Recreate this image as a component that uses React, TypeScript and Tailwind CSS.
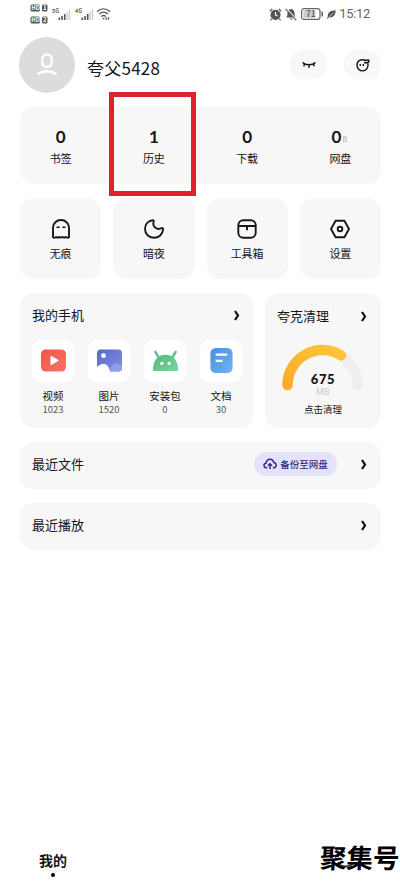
import type { ReactNode } from "react";

interface Item {
  label: string;
  value?: string;
  unit?: string;
  icon?: ReactNode;
}

const Chevron = () => (
  <svg width="6" height="11" viewBox="0 0 6 11" fill="none" stroke="#0c0c0c" strokeWidth="2.2">
    <path d="M1 1l3 4.500L1 10" />
  </svg>
);

const Signal = ({ name }: { name: string }) => (
  <svg width="19" height="14" viewBox="0 0 19 14">
    <text x="0" y="5.5" fontSize="5.5" fontWeight="700" fill="#666">
      {name}
    </text>
    <path d="M6.5 10.5h1.6V13H6.5zM9.2 9h1.6v4H9.2zM11.9 7h1.6v6h-1.6z" fill="#555" />
    <path d="M14.4 4.5h1.4V13h-1.4zM16.8 2.5h1.4V13h-1.4z" fill="#ccc" />
  </svg>
);

const Hd = ({ n }: { n: string }) => (
  <svg width="18" height="8" viewBox="0 0 18 8">
    <rect x="0.5" y="0.5" width="9.5" height="7" rx="1.5" fill="#555" />
    <rect x="12" y="0.5" width="5.5" height="7" rx="1.5" fill="#555" />
    <text x="1.3" y="6.3" fontSize="6" fontWeight="700" fill="#fff">
      HD
    </text>
    <text x="13.1" y="6.3" fontSize="6" fontWeight="700" fill="#fff">
      {n}
    </text>
  </svg>
);

const StatusBar = () => (
  <div className="flex h-[28px] items-center pl-[30px] pr-[30px]">
    <div className="flex flex-col gap-[4px]">
      <Hd n="1" />
      <Hd n="2" />
    </div>
    <div className="ml-[4px] flex items-center gap-[4px]">
      <Signal name="5G" />
      <Signal name="4G" />
    </div>
    <svg className="ml-[2px]" width="16" height="14" viewBox="0 0 16 14" fill="none" stroke="#555" strokeWidth="1.3">
      <path d="M1 4.7c4-3.8 9-3.8 13 0M3.2 7.1c2.8-2.5 6-2.5 8.8 0M5.3 9.5c1.5-1.4 3-1.4 4.5 0" />
      <path d="M6.5 11.7h1.8M10.2 10.2v2.6M12.5 10.2v2.6" />
    </svg>
    <div className="ml-auto flex items-center">
      <svg width="13" height="13" viewBox="0 0 13 13">
        <circle cx="6.5" cy="6.8" r="5.1" fill="#555" />
        <path d="M.8 3.3L3.3.9M12.2 3.3L9.7.9M2.7 10.8l-1.2 1.5M10.3 10.8l1.2 1.5" stroke="#555" strokeWidth="1.2" />
        <path d="M6.5 4v3.1l2 1" stroke="#fff" strokeWidth="1.1" fill="none" />
      </svg>
      <svg className="ml-[3px]" width="12" height="13" viewBox="0 0 12 13">
        <path
          d="M6 1c2.7.3 3.5 2.2 3.5 4.3 0 2.2.5 3.2 1.3 4.2H1.2c.8-1 1.3-2 1.3-4.2C2.5 3.2 3.3 1.3 6 1zM4.6 10.5h2.8c-.4 1.6-2.4 1.6-2.8 0z"
          fill="#555"
        />
        <path d="M1.5.8l10 11" stroke="#fff" strokeWidth="1.6" />
        <path d="M.5.8l10.8 11.6" stroke="#555" strokeWidth="1.1" />
      </svg>
      <svg className="ml-[4px]" width="23" height="12" viewBox="0 0 23 12">
        <rect x="0.6" y="0.6" width="18.4" height="10.8" rx="2.5" fill="none" stroke="#666" strokeWidth="1.2" />
        <rect x="2.3" y="2.3" width="12.2" height="7.4" rx="1" fill="#ccc" />
        <path d="M21.2 3.5v5" stroke="#666" strokeWidth="1.5" />
        <text x="5" y="9" fontSize="8.5" fontWeight="500" fill="#555">
          71
        </text>
      </svg>
      <svg className="ml-[3px]" width="9" height="9" viewBox="0 0 9 9">
        <path d="M8.7.3C4 .5.7 2 .8 6.5L0 8.4l.8.4 1-1.4C6.5 7.8 8.5 5 8.7.3z" fill="#555" />
        <path d="M1.6 7.3l4.8-4.6" stroke="#fff" strokeWidth=".6" />
      </svg>
      <span className="ml-[3px] font-['Roboto'] text-[13px] leading-[14px] tracking-[-0.3px] text-[#666]">15:12</span>
    </div>
  </div>
);

const Header = () => (
  <div className="mt-[8px] flex h-[57px] items-center px-[19px]">
    <div className="flex size-[56px] items-center justify-center rounded-full bg-[#dcdcdc]">
      <svg width="24" height="26" viewBox="0 0 24 26" fill="none" stroke="#fff" strokeWidth="2.4">
        <rect x="7.2" y="2.5" width="9.6" height="12.5" rx="4.8" />
        <path d="M2.5 22.4c5.2-4.2 13.8-4.2 19 0" />
      </svg>
    </div>
    <span className="ml-[12px] mt-[6px] text-[17px] leading-6 tracking-[0.25px]">夸父5428</span>
    <div className="ml-auto flex gap-[17px]">
      <span className="flex h-[29px] w-[37px] items-center justify-center rounded-[14px] bg-[#f8f8f8]">
        <svg width="14" height="8" viewBox="0 0 14 8" fill="none" stroke="#151515" strokeWidth="1.5">
          <path d="M.6 1.4c2.6 3.2 10.2 3.2 12.8 0M2.5 3l-.7 2.4M7 3.7v3M11.5 3l.7 2.4" />
        </svg>
      </span>
      <span className="flex h-[29px] w-[37px] items-center justify-center rounded-[14px] bg-[#f8f8f8]">
        <svg width="14" height="14" viewBox="0 0 14 14" fill="none" stroke="#151515" strokeWidth="1.4">
          <path d="M8 4.800h2.500c1.800-.2 2.700-1 2.500-2-.3-1-2.100-1-3.500-.3C5 .3 1 3.100 1 7.100c0 3.200 2.400 5.800 5.700 5.800 3.500 0 6.100-3.400 5.200-7.600" />
          <path d="M4.200 6v2M7.300 6v2" />
        </svg>
      </span>
    </div>
  </div>
);

const stats: Item[] = [
  { value: "0", label: "书签" },
  { value: "1", label: "历史" },
  { value: "0", label: "下载" },
  { value: "0", label: "网盘", unit: "B" },
];

const Stats = () => (
  <div className="relative mt-[14px] grid h-[77px] grid-cols-4 gap-3 rounded-[14px] bg-[#f7f7f7]">
    {stats.map((item) => (
      <div key={item.label} className="flex flex-col items-center pt-[18px]">
        <div className="relative text-[17px] font-bold leading-[22px]">
          <span className={item.unit ? "relative -left-[4px] font-['Lato']" : "font-['Lato']"}>{item.value}</span>
          {item.unit && (
            <span className="absolute left-[7px] top-[3px] text-[7px] font-normal text-[#aaa]">{item.unit}</span>
          )}
        </div>
        <span className="mt-[2px] text-[11px] leading-4">{item.label}</span>
      </div>
    ))}
    <div className="absolute left-[89px] top-[-15px] h-[104px] w-[87px] border-[5px] border-[#d9232e]" />
  </div>
);

const tools: Item[] = [
  {
    label: "无痕",
    icon: (
      <>
        <path d="M2 18.3V8.5a8 7.5 0 0 1 16 0v9.8c-1 .7-2.2.5-3.2-.4-1.3 1-2.1 1-3.2 0-1.1 1-2.1 1-3.2 0-1.2 1-2 1-3.2 0C4.2 18.800 3 19 2 18.3z" />
        <path d="M5.5 8.3h3.2M11.3 8.3h3.2" strokeWidth="1.5" />
      </>
    ),
  },
  {
    label: "暗夜",
    icon: <path d="M8.3 1.2C4 2 1 5.500 1 9.900c0 5 4 8.900 9 8.900 4.900 0 8.700-3.300 9.100-8.600.1-1-.5-1.400-1.400-1-2.800 1.200-5.300.8-7-1-1.400-1.500-1.700-3.600-1-5.700.3-.8-.4-1.500-1.400-1.300z" />,
  },
  {
    label: "工具箱",
    icon: (
      <>
        <rect x="1.3" y="1.3" width="17.4" height="17.4" rx="5" />
        <path d="M1.3 7h17.4M10 7v4.3" />
      </>
    ),
  },
  {
    label: "设置",
    icon: (
      <>
        <path d="M5.6 1.8h8.8L19 10l-4.6 8.2H5.6L1 10z" />
        <circle cx="10" cy="10" r="2.3" />
      </>
    ),
  },
];

const Tools = () => (
  <div className="mt-[14px] grid grid-cols-4 gap-3">
    {tools.map((tool) => (
      <div key={tool.label} className="flex h-[81px] flex-col items-center rounded-[14px] bg-[#f7f7f7] pt-[21px]">
        <svg width="20" height="20" viewBox="0 0 20 20" fill="none" stroke="#171717" strokeWidth="1.9" strokeLinejoin="round">
          {tool.icon}
        </svg>
        <span className="mt-[6px] text-[11px] leading-4">{tool.label}</span>
      </div>
    ))}
  </div>
);

const files: Item[] = [
  {
    label: "视频",
    value: "1023",
    icon: (
      <>
        <rect x="1" y="2.5" width="26" height="23" rx="5" fill="url(#red)" />
        <path d="M10.8 10.1c0-.8.6-1 1.2-.7l7 4.1c.5.3.5.8 0 1.1l-7 4.1c-.6.3-1.2 0-1.2-.7z" fill="#fff" />
      </>
    ),
  },
  {
    label: "图片",
    value: "1520",
    icon: (
      <>
        <path
          d="M5 2.5h18a4 4 0 0 1 4 4v15a4 4 0 0 1-4 4h-8.5c-1-3.5-2.8-8-6.5-8-3 0-5 1.5-7 3.5V6.5a4 4 0 0 1 4-4z"
          fill="url(#purple)"
        />
        <circle cx="7.8" cy="9" r="2.5" fill="#fff" />
        <path d="M14.5 25.5c0-5 3-8.500 6.5-8.500 2.500 0 4.700 1.500 6 3.500v1a4 4 0 0 1-4 4z" fill="#929fea" />
        <path d="M1 21c2-2 4-3.500 7-3.500 3.700 0 5.500 4.500 6.500 8H1z" fill="#fff" />
      </>
    ),
  },
  {
    label: "安装包",
    value: "0",
    icon: (
      <>
        <path d="M3.5 5l2.8 5M24.5 5l-2.8 5" stroke="#62bd88" strokeWidth="2.5" strokeLinecap="round" />
        <path d="M1 23.5C1 14 6 8 14 8s13 6 13 15.500c0 1-.5 1.500-1.500 1.500h-23C1.500 25 1 24.500 1 23.500z" fill="url(#green)" />
        <circle cx="10.2" cy="17" r="1.7" fill="#fff" />
        <circle cx="17.8" cy="17" r="1.7" fill="#fff" />
      </>
    ),
  },
  {
    label: "文档",
    value: "30",
    icon: (
      <>
        <rect x="2.500" y="1" width="23" height="26" rx="5.500" fill="url(#blue)" />
        <path d="M8 8h12M8 14.300h7" stroke="#fff" strokeWidth="2.4" />
      </>
    ),
  },
];

const Gradients = () => (
  <svg width="0" height="0" className="absolute">
    <defs>
      <linearGradient id="red" x1="0" y1="0" x2="1" y2="1">
        <stop stopColor="#f05149" />
        <stop offset="1" stopColor="#f97566" />
      </linearGradient>
      <linearGradient id="purple" x1="0" y1="0" x2="1" y2="1">
        <stop stopColor="#5966c8" />
        <stop offset="1" stopColor="#8492e5" />
      </linearGradient>
      <linearGradient id="green" x1="0" y1="0" x2="1" y2="1">
        <stop stopColor="#55b57c" />
        <stop offset="1" stopColor="#79d69d" />
      </linearGradient>
      <linearGradient id="blue" x1="0" y1="0" x2="1" y2="1">
        <stop stopColor="#4790dc" />
        <stop offset="1" stopColor="#71b4f1" />
      </linearGradient>
      <linearGradient id="gauge" x1="0" y1="1" x2="1" y2="0">
        <stop stopColor="#fdab2b" />
        <stop offset="1" stopColor="#fdc43c" />
      </linearGradient>
    </defs>
  </svg>
);

const PhoneCard = () => (
  <div className="h-[135px] w-[234px] rounded-[14px] bg-[#f7f7f7] pt-[12px]">
    <div className="flex items-center justify-between pl-[12px] pr-[14px]">
      <span className="text-[13px] leading-5">我的手机</span>
      <Chevron />
    </div>
    <div className="mt-[15px] flex gap-[14px] pl-[12px]">
      {files.map((file) => (
        <div key={file.label} className="flex w-[42px] flex-col items-center">
          <div className="flex size-[42px] items-center justify-center rounded-[9px] bg-white pb-[2px]">
            <svg width="27" height="27" viewBox="0 0 28 28">
              {file.icon}
            </svg>
          </div>
          <span className="mt-[6px] whitespace-nowrap text-[10.5px] leading-4">{file.label}</span>
          <span className="-mt-px text-[9.5px] leading-3 text-[#555]">{file.value}</span>
        </div>
      ))}
    </div>
  </div>
);

const CleanCard = () => (
  <div className="h-[135px] w-[116px] rounded-[14px] bg-[#f7f7f7] pt-[13px]">
    <div className="flex items-center justify-between pl-[12px] pr-[14px]">
      <span className="text-[13px] leading-5">夸克清理</span>
      <Chevron />
    </div>
    <div className="relative mt-[17px] flex flex-col items-center">
      <svg className="absolute left-[16px] top-0" width="84" height="50" viewBox="0 0 84 50" fill="none" strokeWidth="10.5" strokeLinecap="round">
        <path d="M60 12.400A35 35 0 0 1 76.500 42" stroke="#eee" />
        <path d="M6.500 42A35 35 0 0 1 60 12.400" stroke="url(#gauge)" />
      </svg>
      <span className="relative mt-[30px] font-['Lato'] text-[13px] font-black leading-[12px] tracking-[0.6px]">675</span>
      <span className="relative mt-[3px] font-['Roboto'] text-[9px] leading-[8px] tracking-[0.3px] text-[#ccc]">MB</span>
      <span className="mt-[6px] text-[9.5px] leading-[14px]">点击清理</span>
    </div>
  </div>
);

const RecentRow = ({ title, children }: { title: string; children?: ReactNode }) => (
  <div className="mt-[14px] flex h-[47px] items-center rounded-[14px] bg-[#f7f7f7] pb-[3px] pl-[12px] pr-[14px]">
    <span className="text-[13px] leading-5">{title}</span>
    <div className="ml-auto flex items-center gap-[24px]">
      {children}
      <Chevron />
    </div>
  </div>
);

const BackupButton = () => (
  <button className="flex h-[24px] w-[83px] items-center justify-center gap-[3px] rounded-full bg-[#e4e2f8] text-[#302c88]">
    <svg width="14" height="12" viewBox="0 0 14 12" fill="none" stroke="currentColor" strokeWidth="1.5">
      <path d="M4.3 9.8H3.5C.3 9.5.2 5.4 3.2 4.9 3.8.1 9.9-.2 10.7 4.6c3.3.3 3.2 4.9 0 5.2h-.9M7 11V6M4.8 7.8L7 5.7l2.2 2.100" />
    </svg>
    <span className="text-[9.5px] font-medium leading-4">备份至网盘</span>
  </button>
);

const BottomBar = () => (
  <div className="mt-auto flex h-[50px] justify-between pl-[39px]">
    <div className="flex flex-col items-center pt-[12px]">
      <span className="text-[14px] font-bold leading-5">我的</span>
      <span className="mt-[3px] size-[4px] rounded-full bg-black" />
    </div>
    <div className="relative">
      <svg className="absolute left-[15px] top-[10px]" width="22" height="22" viewBox="0 0 22 22" fill="none" stroke="#333" strokeWidth="1.6">
        <path d="M4 15c1.500 4 10.500 5 14 0M3 9c1-3 3.500-5 7-5.500" />
      </svg>
      <span className="relative -top-px block -skew-x-3 whitespace-nowrap pr-px text-[26.5px] font-bold leading-[40px] text-black">
        聚集号
      </span>
    </div>
  </div>
);

export default function App() {
  return (
    <div className="flex h-[888px] w-[400px] flex-col overflow-hidden bg-white font-['Noto_Sans_CJK_SC',sans-serif] text-[#151515]">
      <Gradients />
      <StatusBar />
      <Header />
      <main className="pl-[20px] pr-[19px]">
        <Stats />
        <Tools />
        <div className="mt-[14px] flex justify-between">
          <PhoneCard />
          <CleanCard />
        </div>
        <RecentRow title="最近文件">
          <BackupButton />
        </RecentRow>
        <RecentRow title="最近播放" />
      </main>
      <BottomBar />
    </div>
  );
}
